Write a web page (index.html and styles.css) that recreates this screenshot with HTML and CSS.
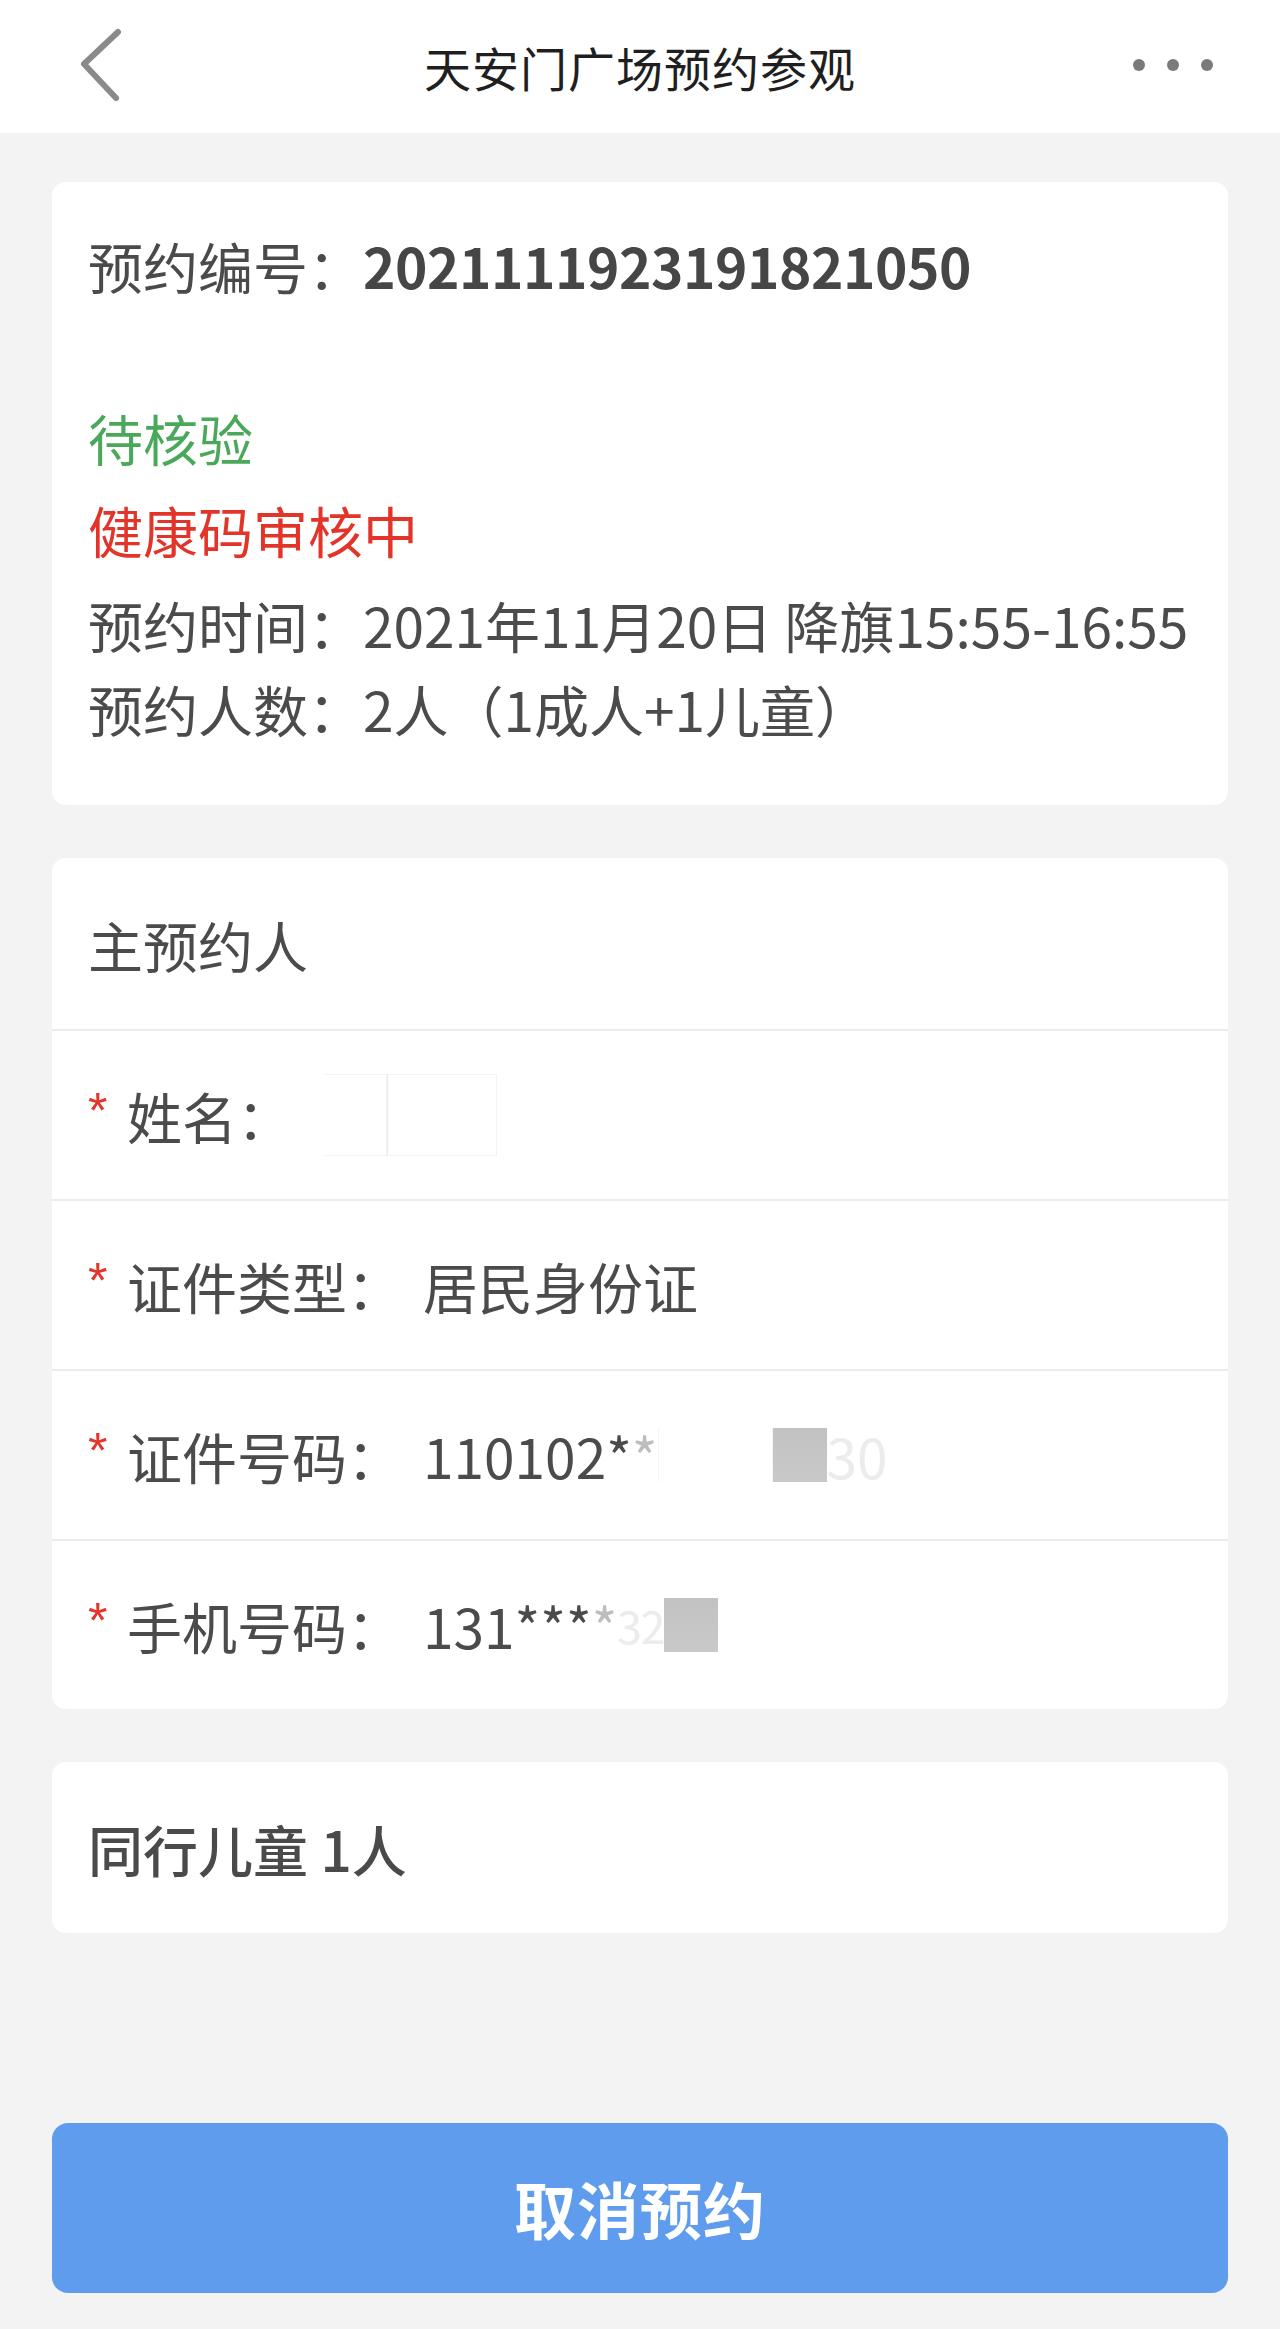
FILE: index.html
```html
<!DOCTYPE html>
<html lang="zh-CN">
<head>
<meta charset="utf-8">
<title>天安门广场预约参观</title>
<link rel="stylesheet" href="styles.css">
</head>
<body>
<header class="topbar">
  <svg class="back" width="48" height="80" viewBox="0 0 48 80" aria-hidden="true">
    <path d="M40 4 L6 36 L38 70" fill="none" stroke="#8a8a8a" stroke-width="6" stroke-linecap="round" stroke-linejoin="round"/>
  </svg>
  <h1 class="title">天安门广场预约参观</h1>
  <div class="more" aria-hidden="true"><span></span><span></span><span></span></div>
</header>

<main class="content">
  <section class="card summary">
    <p class="order-no">预约编号：<b>2021111923191821050</b></p>
    <p class="status ok">待核验</p>
    <p class="status warn">健康码审核中</p>
    <p class="info time">预约时间：2021年11月20日 降旗15:55-16:55</p>
    <p class="info count">预约人数：2人（1成人+1儿童）</p>
  </section>

  <section class="card person">
    <div class="person-head">主预约人</div>
    <div class="row"><span class="req">*</span><span class="label">姓名：</span><span class="value masked"><span class="ghost g1"></span><span class="ghost g2"></span></span></div>
    <div class="row"><span class="req">*</span><span class="label">证件类型：</span><span class="value">居民身份证</span></div>
    <div class="row"><span class="req">*</span><span class="label">证件号码：</span><span class="value masked">110102*<span class="light">*</span><span class="blank w-id"></span><span class="grey-box"></span><span class="faint">30</span></span></div>
    <div class="row"><span class="req">*</span><span class="label">手机号码：</span><span class="value masked">131***<span class="light">*</span><span class="faint f-phone">32</span><span class="grey-box"></span></span></div>
  </section>

  <section class="card kids">同行儿童 1人</section>

  <button class="cancel" type="button">取消预约</button>
</main>
</body>
</html>
```

FILE: styles.css
```css
* { box-sizing: border-box; }
html, body { margin: 0; padding: 0; }
body {
  width: 1280px;
  min-height: 2329px;
  background: #f3f3f3;
  font-family: "Noto Sans CJK SC", "Noto Sans", sans-serif;
  color: #4b4b4b;
}
p { margin: 0; }

.topbar {
  position: relative;
  height: 133px;
  background: #fff;
  display: flex;
  align-items: center;
  justify-content: center;
}
.back {
  position: absolute;
  left: 78px;
  top: 28px;
}
.title {
  margin: 0;
  font-size: 47px;
  font-weight: 400;
  color: #1f1f1f;
  line-height: 1;
  letter-spacing: 1px;
}
.more {
  position: absolute;
  right: 67px;
  top: 59px;
  display: flex;
  gap: 22px;
}
.more span {
  width: 12px;
  height: 12px;
  border-radius: 50%;
  background: #7a7a7a;
}

.content {
  padding: 49px 52px 0;
  display: flex;
  flex-direction: column;
  gap: 53px;
}
.card {
  background: #fff;
  border-radius: 14px;
}

.summary {
  padding: 43px 36px 57px;
  font-size: 55px;
  line-height: 80px;
}
.order-no { font-weight: 400; color: #4a4a4a; }
.order-no b { font-weight: 700; color: #464646; letter-spacing: -0.45px; }
.status.ok { color: #4aa85a; margin-top: 92px; }
.status.warn { color: #e3342a; margin-top: 12px; }
.info.time { margin-top: 15px; }
.info.count { margin-top: 4px; }

.person { overflow: hidden; }
.person-head {
  height: 171px;
  display: flex;
  align-items: center;
  padding-left: 36px;
  font-size: 55px;
  color: #4b4b4b;
}
.row {
  height: 170px;
  border-top: 2px solid #ececec;
  display: flex;
  align-items: center;
  padding-left: 36px;
  font-size: 55px;
}
.req {
  width: 39px;
  color: #e5342a;
  font-family: "Liberation Sans", sans-serif;
  font-size: 50px;
  line-height: 1;
  position: relative;
  top: -4px;
}
.label { margin-right: 21px; }
.value { display: inline-flex; align-items: center; }
.light { color: #bdbdbd; }
.faint { color: #ececec; }
.f-phone { font-size: 44px; letter-spacing: -1px; }
.blank {
  display: inline-block;
  height: 54px;
  border-left: 1px solid #f4f4f4;
  border-right: 1px solid #f4f4f4;
}
.w-id { width: 115px; }
.grey-box {
  display: inline-block;
  width: 54px;
  height: 54px;
  background: linear-gradient(#c2c2c2, #c9c9c9);
}
.ghost {
  display: inline-block;
  height: 82px;
  border: 1px solid #f3f3f3;
  border-left: 0;
}
.g1 { width: 62px; margin-left: 12px; }
.g2 { width: 110px; border-left: 1px solid #eaeaea; }

.kids {
  height: 171px;
  display: flex;
  align-items: center;
  padding-left: 36px;
  font-size: 55px;
  font-weight: 500;
  color: #4a4a4a;
}

.cancel {
  margin-top: 137px;
  height: 170px;
  border: 0;
  border-radius: 16px;
  background: #5f9cee;
  color: #fff;
  font-family: "Noto Sans CJK SC", sans-serif;
  font-size: 62px;
  font-weight: 700;
  letter-spacing: 1px;
}
```
